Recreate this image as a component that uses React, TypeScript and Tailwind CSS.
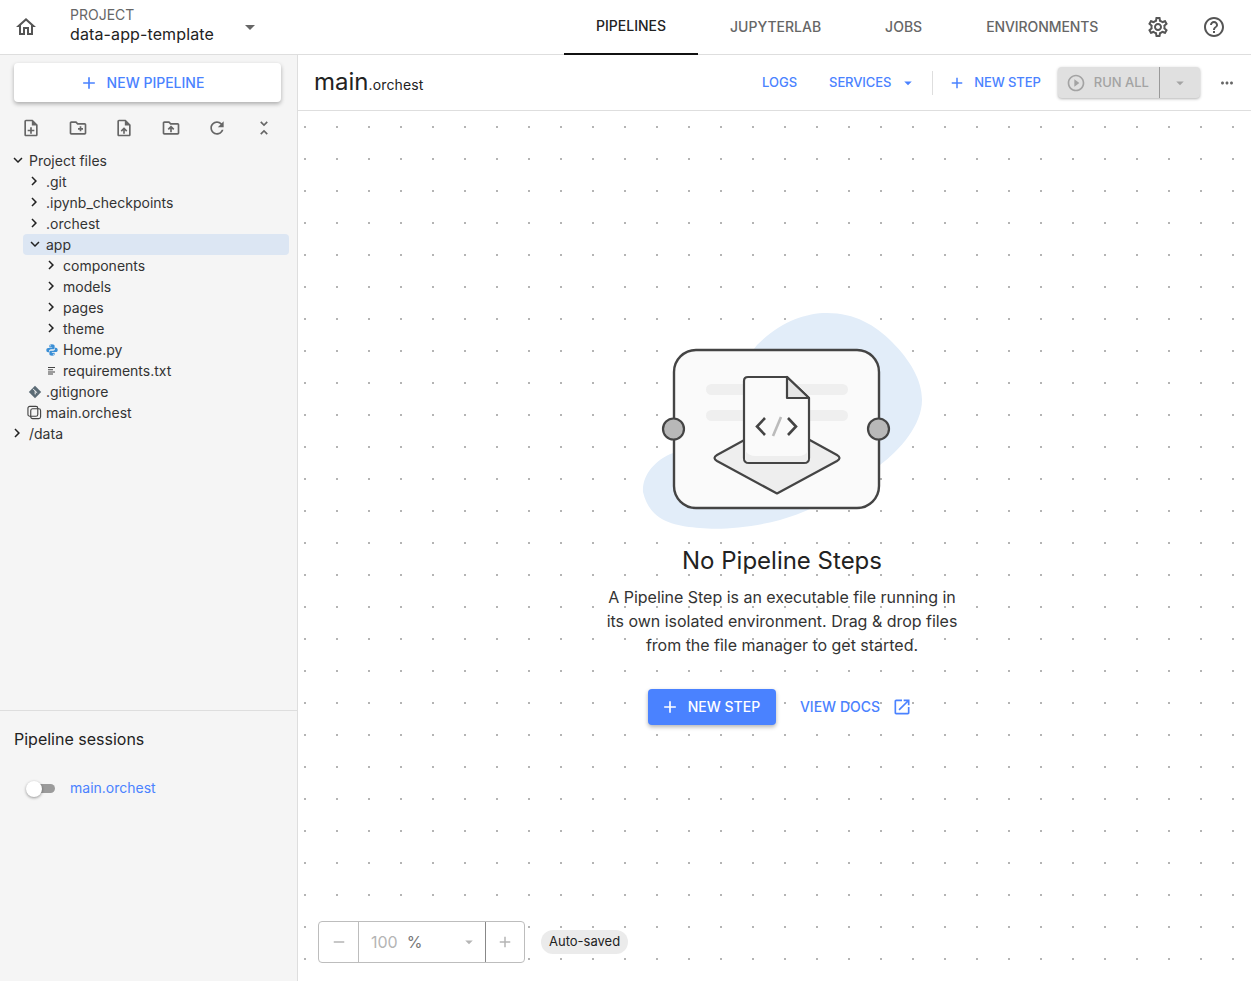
const Icon = ({ d, className }: { d: string; className?: string }) => (
  <svg viewBox="0 0 24 24" fill="currentColor" className={className}>
    <path d={d} />
  </svg>
);

const paths = {
  home: "m12 5.69 5 4.5V18h-2v-6H9v6H7v-7.81l5-4.5M12 3 2 12h3v8h6v-6h2v6h6v-8h3L12 3z",
  noteAdd: "M13 11h-2v3H8v2h3v3h2v-3h3v-2h-3zm1-9H6c-1.1 0-2 .9-2 2v16c0 1.1.89 2 1.99 2H18c1.1 0 2-.9 2-2V8l-6-6zm4 18H6V4h7v5h5v11z",
  newFolder: "M20 6h-8l-2-2H4c-1.11 0-1.99.89-1.99 2L2 18c0 1.11.89 2 2 2h16c1.11 0 2-.89 2-2V8c0-1.11-.89-2-2-2zm0 12H4V6h5.17l2 2H20v10zm-8-4h2v2h2v-2h2v-2h-2v-2h-2v2h-2z",
  uploadFile: "M14 2H6c-1.1 0-1.99.9-1.99 2L4 20c0 1.1.89 2 1.99 2H18c1.1 0 2-.9 2-2V8l-6-6zm4 18H6V4h7v5h5v11zM8 15.01l1.41 1.41L11 14.84V19h2v-4.16l1.59 1.59L16 15.01 12.01 11 8 15.01z",
  uploadFolder: "M20 6h-8l-2-2H4c-1.1 0-1.99.9-1.99 2L2 18c0 1.1.9 2 2 2h16c1.1 0 2-.9 2-2V8c0-1.1-.9-2-2-2zm0 12H4V6h5.17l2 2H20v10zM9.41 14.42 11 12.84V17h2v-4.16l1.59 1.59L16 13.01 12.01 9 8 13.01l1.41 1.41z",
  refresh: "M17.65 6.35C16.2 4.9 14.21 4 12 4c-4.42 0-7.99 3.58-7.99 8s3.57 8 7.99 8c3.73 0 6.84-2.55 7.73-6h-2.08c-.82 2.33-3.04 4-5.65 4-3.31 0-6-2.69-6-6s2.69-6 6-6c1.66 0 3.14.69 4.22 1.78L13 11h7V4l-2.35 2.35z",
  unfoldLess: "M7.41 18.59 8.83 20 12 16.83 15.17 20l1.41-1.41L12 14l-4.59 4.59zm9.18-13.18L15.17 4 12 7.17 8.83 4 7.41 5.41 12 10l4.59-4.59z",
  add: "M19 13h-6v6h-2v-6H5v-2h6V5h2v6h6v2z",
  remove: "M19 13H5v-2h14v2z",
  settings: "M19.43 12.98c.04-.32.07-.64.07-.98 0-.34-.03-.66-.07-.98l2.11-1.65c.19-.15.24-.42.12-.64l-2-3.46c-.09-.16-.26-.25-.44-.25-.06 0-.12.01-.17.03l-2.49 1c-.52-.4-1.08-.73-1.69-.98l-.38-2.65C14.46 2.18 14.25 2 14 2h-4c-.25 0-.46.18-.49.42l-.38 2.65c-.61.25-1.17.59-1.69.98l-2.49-1c-.06-.02-.12-.03-.18-.03-.17 0-.34.09-.43.25l-2 3.46c-.13.22-.07.49.12.64l2.11 1.65c-.04.32-.07.65-.07.98 0 .33.03.66.07.98l-2.11 1.65c-.19.15-.24.42-.12.64l2 3.46c.09.16.26.25.44.25.06 0 .12-.01.17-.03l2.49-1c.52.4 1.08.73 1.69.98l.38 2.65c.03.24.24.42.49.42h4c.25 0 .46-.18.49-.42l.38-2.65c.61-.25 1.17-.59 1.69-.98l2.49 1c.06.02.12.03.18.03.17 0 .34-.09.43-.25l2-3.46c.12-.22.07-.49-.12-.64l-2.11-1.65zm-1.98-1.71c.04.31.05.52.05.73 0 .21-.02.43-.05.73l-.14 1.13.89.7 1.08.84-.7 1.21-1.27-.51-1.04-.42-.9.68c-.43.32-.84.56-1.25.73l-1.06.43-.16 1.13-.2 1.35h-1.4l-.19-1.35-.16-1.13-1.06-.43c-.43-.18-.83-.41-1.23-.71l-.91-.7-1.06.43-1.27.51-.7-1.21 1.08-.84.89-.7-.14-1.13c-.03-.31-.05-.54-.05-.74s.02-.43.05-.73l.14-1.13-.89-.7-1.08-.84.7-1.21 1.27.51 1.04.42.9-.68c.43-.32.84-.56 1.25-.73l1.06-.43.16-1.13.2-1.35h1.39l.19 1.35.16 1.13 1.06.43c.43.18.83.41 1.23.71l.91.7 1.06-.43 1.27-.51.7 1.21-1.07.85-.89.7.14 1.13zM12 8c-2.21 0-4 1.79-4 4s1.79 4 4 4 4-1.79 4-4-1.79-4-4-4zm0 6c-1.1 0-2-.9-2-2s.9-2 2-2 2 .9 2 2-.9 2-2 2z",
  help: "M11 18h2v-2h-2v2zm1-16C6.48 2 2 6.48 2 12s4.48 10 10 10 10-4.48 10-10S17.52 2 12 2zm0 18c-4.41 0-8-3.59-8-8s3.59-8 8-8 8 3.59 8 8-3.59 8-8 8zm0-14c-2.21 0-4 1.79-4 4h2c0-1.1.9-2 2-2s2 .9 2 2c0 2-3 1.75-3 5h2c0-2.25 3-2.5 3-5 0-2.21-1.79-4-4-4z",
  caret: "m7 10 5 5 5-5z",
  more: "M6 10c-1.1 0-2 .9-2 2s.9 2 2 2 2-.9 2-2-.9-2-2-2zm12 0c-1.1 0-2 .9-2 2s.9 2 2 2 2-.9 2-2-.9-2-2-2zm-6 0c-1.1 0-2 .9-2 2s.9 2 2 2 2-.9 2-2-.9-2-2-2z",
  play: "m10 16.5 6-4.5-6-4.5v9zM12 2C6.48 2 2 6.48 2 12s4.48 10 10 10 10-4.48 10-10S17.52 2 12 2zm0 18c-4.41 0-8-3.59-8-8s3.59-8 8-8 8 3.59 8 8-3.59 8-8 8z",
  openNew: "M19 19H5V5h7V3H5c-1.11 0-2 .9-2 2v14c0 1.1.89 2 2 2h14c1.1 0 2-.9 2-2v-7h-2v7zM14 3v2h3.59l-9.83 9.83 1.41 1.41L19 6.41V10h2V3h-7z",
  expand: "M16.59 8.59 12 13.17 7.41 8.59 6 10l6 6 6-6z",
  chevron: "M10 6 8.59 7.41 13.17 12l-4.58 4.59L10 18l6-6z",
};

const PythonIcon = () => (
  <svg viewBox="0 0 16 16" className="w-[14px] h-[14px]">
    <path fill="#3b8fd6" d="M8 1.5c-2.6 0-3 1-3 2V5h3.2v.6H3.6c-1.2 0-2.1 1-2.1 2.5s.8 2.6 2 2.6h1.2V9.2c0-1.1 1-2 2.1-2h2.6c.9 0 1.6-.7 1.6-1.6V3.500c0-1-1-2-3-2zM6.400 2.500a.6.6 0 1 1 0 1.2.6.6 0 0 1 0-1.2z" />
    <path fill="#3b8fd6" d="M8 14.5c2.6 0 3-1 3-2V11H7.800v-.6h4.600c1.200 0 2.100-1 2.100-2.500s-.8-2.600-2-2.600h-1.200v1.500c0 1.100-1 2-2.100 2H6.600c-.9 0-1.600.7-1.600 1.600v2.100c0 1 1 2 3 2zm1.600-1a.6.6 0 1 1 0-1.200.6.6 0 0 1 0 1.200z" />
  </svg>
);

const TextIcon = () => (
  <svg viewBox="0 0 12 12" className="w-3 h-3 text-[#444]" fill="currentColor">
    <path d="M2 2h7v1H2zM2 4.2h5v1H2zM2 6.4h7v1H2zM2 8.6h5v1H2z" />
  </svg>
);

const GitIcon = () => (
  <svg viewBox="0 0 14 14" className="w-[14px] h-[14px]">
    <path fill="#5b6b75" d="M7 .8 13.200 7 7 13.200.8 7z" />
    <path stroke="#f5f5f5" strokeWidth="1" d="M5 3.800 7.200 6v3.400M7.200 6l2 1.800" fill="none" />
  </svg>
);

const OrchestIcon = () => (
  <svg viewBox="0 0 16 16" className="w-[15px] h-[15px] text-[#444]" fill="none" stroke="currentColor" strokeWidth="1.2">
    <rect x="1" y="1.5" width="10.5" height="10.5" rx="2" />
    <rect x="4" y="4" width="10.5" height="10.5" rx="2" />
  </svg>
);

type Row = { label: string; depth: number; kind: "open" | "closed" | "py" | "txt" | "git" | "orchest"; selected?: boolean };

const rows: Row[] = [
  { label: "Project files", depth: 0, kind: "open" },
  { label: ".git", depth: 1, kind: "closed" },
  { label: ".ipynb_checkpoints", depth: 1, kind: "closed" },
  { label: ".orchest", depth: 1, kind: "closed" },
  { label: "app", depth: 1, kind: "open", selected: true },
  { label: "components", depth: 2, kind: "closed" },
  { label: "models", depth: 2, kind: "closed" },
  { label: "pages", depth: 2, kind: "closed" },
  { label: "theme", depth: 2, kind: "closed" },
  { label: "Home.py", depth: 2, kind: "py" },
  { label: "requirements.txt", depth: 2, kind: "txt" },
  { label: ".gitignore", depth: 1, kind: "git" },
  { label: "main.orchest", depth: 1, kind: "orchest" },
  { label: "/data", depth: 0, kind: "closed" },
];

const depthClass = ["ml-[6px]", "ml-[23px]", "ml-[40px]"];

const TreeRow = ({ row }: { row: Row }) => (
  <div className={`h-[21px] flex items-center rounded-[4px] mr-2 ${depthClass[row.depth]} ${row.selected ? "bg-[#dce6f3]" : ""}`}>
    <span className="w-[23px] h-[21px] flex items-center justify-center shrink-0 text-[#222]">
      {row.kind === "open" && <Icon d={paths.expand} className="w-[18px] h-[18px] -mt-[1px]" />}
      {row.kind === "closed" && <Icon d={paths.chevron} className="w-[18px] h-[18px] -mt-[1px] -ml-[1px]" />}
      {row.kind === "py" && <PythonIcon />}
      {row.kind === "txt" && <TextIcon />}
      {row.kind === "git" && <GitIcon />}
      {row.kind === "orchest" && <OrchestIcon />}
    </span>
    <span className="text-[14px] text-[#333] leading-[21px]">{row.label}</span>
  </div>
);

const Illustration = () => (
  <svg viewBox="0 0 300 240" className="w-[300px] h-[240px] -ml-[4px]" fill="none">
    <path
      fill="#e2edf9"
      d="M127 45C150 22 175 13 197 13C225 13 245 25 262 42C280 60 292 80 292 100C292 125 270 150 250 165C220 190 190 208 150 220C120 228 90 230 70 228C45 226 20 222 13 192C12 175 25 160 43 153Z"
    />
    <rect x="44" y="50" width="205" height="158" rx="22" fill="#fafafa" stroke="#444" strokeWidth="2.4" />
    <rect x="76" y="84" width="142" height="11" rx="5.5" fill="#efefef" />
    <rect x="76" y="110" width="142" height="11" rx="5.5" fill="#efefef" />
    <circle cx="43.5" cy="129" r="10.5" fill="#b8b8b8" stroke="#444" strokeWidth="2.2" />
    <circle cx="248.5" cy="129" r="10.5" fill="#b8b8b8" stroke="#444" strokeWidth="2.2" />
    <path
      d="M147 122 207 155Q212 158 207 161L147 193.500L87 161Q82 158 87 155Z"
      fill="#eee"
      stroke="#444"
      strokeWidth="2.2"
      strokeLinejoin="round"
    />
    <path
      d="M118 77H157L179 98V158Q179 163 174 163H119Q114 163 114 158V81Q114 77 118 77Z"
      fill="#fafafa"
      stroke="#444"
      strokeWidth="2.2"
      strokeLinejoin="round"
    />
    <path d="M115 150Q118 156 126 156H168Q176 156 178 150V158Q178 162 174 162H119Q115 162 115 158Z" fill="#eee" />
    <path d="M157 77V98H179Z" fill="#e6e6e6" stroke="#444" strokeWidth="2.2" strokeLinejoin="round" />
    <path d="M135 118 127 126.500 135 135M158 118 166 126.500 158 135" stroke="#444" strokeWidth="2.600" />
    <path d="M151 117 143 136" stroke="#bbb" strokeWidth="2.600" />
  </svg>
);

const tabClass = "h-[55px] px-8 pb-[2px] flex items-center text-[14px] font-medium";

export default function App() {
  return (
    <div className="w-[1251px] h-[981px] overflow-hidden flex flex-col bg-white font-['Inter',sans-serif] text-[#222]">
      {/* Header */}
      <header className="h-[55px] shrink-0 border-b border-[#dedede] flex items-center">
        <Icon d={paths.home} className="w-6 h-6 ml-[14px] text-[#555]" />
        <div className="ml-[32px] w-[168px] -mt-[4px]">
          <div className="text-[14px] leading-[16px] text-[#666]">PROJECT</div>
          <div className="text-[16px] leading-[20px] mt-[1px] text-[#222] tracking-[0.12px]">data-app-template</div>
        </div>
        <Icon d={paths.caret} className="w-6 h-6 -mt-[1px] text-[#666]" />
        <nav className="flex self-start ml-[302px]">
          <div className={`${tabClass} text-[#222] border-b-2 border-[#111]`}>PIPELINES</div>
          <div className={`${tabClass} text-[#666]`}>JUPYTERLAB</div>
          <div className={`${tabClass} text-[#666]`}>JOBS</div>
          <div className={`${tabClass} text-[#666] tracking-[-0.08px]`}>ENVIRONMENTS</div>
        </nav>
        <Icon d={paths.settings} className="w-6 h-6 ml-[16px] text-[#555]" />
        <Icon d={paths.help} className="w-6 h-6 ml-[32px] text-[#555]" />
      </header>

      <div className="flex-1 flex min-h-0">
        {/* Sidebar */}
        <aside className="w-[298px] shrink-0 bg-[#f5f5f5] border-r border-[#dedede] flex flex-col">
          <div className="h-[655px] shrink-0 pt-2">
            <div className="ml-[14px] mr-[16px] h-[39px] pr-[12px] bg-white rounded-[4px] shadow-[0_2px_4px_rgba(0,0,0,0.3)] flex items-center justify-center text-[14px] font-medium text-[#4a82ff]">
              <Icon d={paths.add} className="w-5 h-5 mr-[8px]" />
              NEW PIPELINE
            </div>
            <div className="mt-[16px] ml-[21px] mr-[23px] flex justify-between text-[#666]">
              <Icon d={paths.noteAdd} className="w-5 h-5" />
              <Icon d={paths.newFolder} className="w-5 h-5" />
              <Icon d={paths.uploadFile} className="w-5 h-5" />
              <Icon d={paths.uploadFolder} className="w-5 h-5" />
              <Icon d={paths.refresh} className="w-5 h-5" />
              <Icon d={paths.unfoldLess} className="w-5 h-5" />
            </div>
            <div className="mt-[12px]">
              {rows.map((row) => (
                <TreeRow key={row.label} row={row} />
              ))}
            </div>
          </div>
          <div className="flex-1 border-t border-[#dedede] px-[14px]">
            <div className="mt-[16px] text-[16px] leading-[24px] text-[#222]">Pipeline sessions</div>
            <div className="mt-[25px] flex items-center h-[24px]">
              <div className="relative w-[29px] h-[16px] ml-[12px] mt-[1px] flex items-center">
                <div className="ml-[2px] w-[27px] h-[9px] rounded-full bg-[#9b9b9b]" />
                <div className="absolute left-0 top-0 w-[16px] h-[16px] rounded-full bg-white shadow-[0_1px_3px_rgba(0,0,0,0.4)]" />
              </div>
              <span className="ml-[15px] -mt-[1px] text-[14px] text-[#4a82ff]">main.orchest</span>
            </div>
          </div>
        </aside>

        {/* Canvas */}
        <main className="flex-1 min-w-0 flex flex-col">
          <div className="h-[56px] shrink-0 border-b border-[#dedede] flex items-center pl-4 text-[#4a82ff] text-[13px] font-medium">
            <div className="w-[448px] text-[#222] font-normal -mt-[1px]">
              <span className="text-[24px]">main</span>
              <span className="text-[14px] tracking-[0.15px]">.orchest</span>
            </div>
            <span>LOGS</span>
            <span className="ml-[32px] tracking-[-0.1px]">SERVICES</span>
            <Icon d={paths.caret} className="w-[18px] h-[18px] ml-[8px]" />
            <div className="ml-[15px] w-px h-[24px] bg-[#dedede]" />
            <Icon d={paths.add} className="w-[18px] h-[18px] ml-[15px]" />
            <span className="ml-[8px] tracking-[-0.1px]">NEW STEP</span>
            <div className="ml-[17px] w-[142px] h-[31px] rounded-[4px] bg-[#e0e0e0] shadow-[0_1px_3px_rgba(0,0,0,0.3)] flex items-center text-[#a3a3a3]">
              <Icon d={paths.play} className="w-[20px] h-[20px] ml-[8px]" />
              <span className="ml-[8px] w-[65px]">RUN ALL</span>
              <div className="w-px h-[31px] bg-[#999]" />
              <Icon d={paths.caret} className="w-[18px] h-[18px] ml-[11px]" />
            </div>
            <Icon d={paths.more} className="w-[18px] h-[18px] ml-[18px] text-[#666]" />
          </div>

          <div className="relative flex-1 bg-[radial-gradient(circle,#b4b4b4_0.8px,transparent_1.1px)] bg-[length:32px_32px] bg-[position:23px_0px]">
            <div className="flex flex-col items-center pt-[189px] pl-[15px]">
              <Illustration />
              <h2 className="mt-[5px] text-[24px] leading-[32px] text-[#222]">No Pipeline Steps</h2>
              <p className="mt-[8px] text-[16px] leading-[24px] text-[#333] text-center tracking-[-0.02px]">
                A Pipeline Step is an executable file running in
                <br />
                its own isolated environment. Drag &amp; drop files
                <br />
                from the file manager to get started.
              </p>
              <div className="mt-[32px] pr-[4px] flex items-center text-[14px] font-medium">
                <div className="h-[36px] w-[128px] pr-[4px] pb-[1px] rounded-[4px] bg-[#4a82ff] text-white shadow-[0_2px_4px_rgba(0,0,0,0.3)] flex items-center justify-center">
                  <Icon d={paths.add} className="w-5 h-5 mr-[8px]" />
                  NEW STEP
                </div>
                <span className="ml-[24px] pb-[1px] text-[#4a82ff]">VIEW DOCS</span>
                <Icon d={paths.openNew} className="w-5 h-5 ml-[12px] text-[#4a82ff]" />
              </div>
            </div>

            {/* Zoom controls */}
            <div className="absolute left-[20px] bottom-[18px] flex items-center">
              <div className="h-[42px] w-[207px] bg-white rounded-[4px] border border-[#bdbdbd] flex items-center text-[#b5b5b5]">
                <div className="w-[40px] h-full flex items-center justify-center border-r border-[#bdbdbd]">
                  <Icon d={paths.remove} className="w-[18px] h-[18px]" />
                </div>
                <div className="w-[127px] h-full flex items-center pl-[12px] text-[16px] border-r border-[#888]">
                  <span>100</span>
                  <span className="ml-[9px] text-[#777]">%</span>
                  <Icon d={paths.caret} className="w-[18px] h-[18px] ml-[38px]" />
                </div>
                <div className="flex-1 flex items-center justify-center">
                  <Icon d={paths.add} className="w-[18px] h-[18px]" />
                </div>
              </div>
              <div className="ml-[16px] h-[24px] px-[8px] rounded-full bg-[#ebebeb] flex items-center text-[13px] text-[#222]">
                Auto-saved
              </div>
            </div>
          </div>
        </main>
      </div>
    </div>
  );
}
